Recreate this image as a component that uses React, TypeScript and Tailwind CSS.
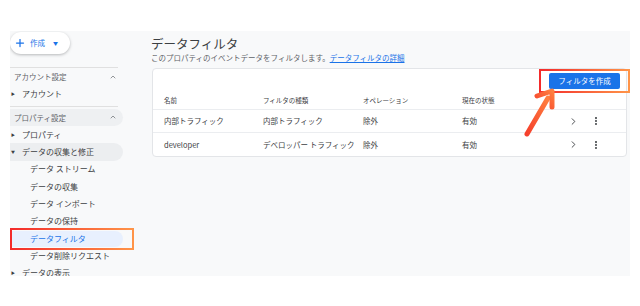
import { ChevronRight, ChevronUp, MoreVertical, Plus } from 'lucide-react'

const font = { fontFamily: '"Noto Sans CJK JP", "Noto Sans", sans-serif' }

const rows = [
  { name: '内部トラフィック', type: '内部トラフィック', op: '除外', state: '有効' },
  { name: 'developer', type: 'デベロッパー トラフィック', op: '除外', state: '有効' },
]

function Caret({ open }: { open?: boolean }) {
  return (
    <span className="w-[12px] flex justify-start pl-[1px] text-[4px] text-[#3c4043]">{open ? '▼' : '▶'}</span>
  )
}

function SubItem({ label }: { label: string }) {
  return <div className="shrink-0 h-[17.33px] flex items-center pl-[20px] text-[8px] text-[#3c4043]">{label}</div>
}

export default function App() {
  return (
    <div className="w-[640px] h-[306px] bg-white pt-[31px] px-[10px] overflow-hidden" style={font}>
      <div className="h-[245px] bg-[#f8f9fa] flex overflow-hidden">
        {/* sidebar */}
        <aside className="w-[130px] shrink-0 flex flex-col">
          <button className="shrink-0 mt-[1px] w-[60px] h-[22px] rounded-full bg-white shadow-[0_1px_3px_rgba(60,64,67,0.35)] flex items-center pl-[4px] gap-[4px] text-[#1a73e8]">
            <Plus size={12} strokeWidth={2.5} />
            <span className="text-[7.5px]">作成</span>
            <span className="ml-[4px] text-[5px]">▼</span>
          </button>
          <div className="shrink-0 mt-[13px] w-[108px] h-px bg-[#e0e0e0]" />
          <div className="shrink-0 h-[17.33px] w-[113px] flex items-center justify-between pl-[4px] pr-[6px] text-[7.5px] text-[#5f6368]">
            <span>アカウント設定</span>
            <ChevronUp size={8} strokeWidth={2} />
          </div>
          <div className="shrink-0 h-[17.33px] flex items-center text-[8px] text-[#3c4043]">
            <Caret />
            <span>アカウント</span>
          </div>
          <div className="shrink-0 mt-[3px] w-[108px] h-px bg-[#e0e0e0]" />
          <div className="shrink-0 mt-[2px] h-[17.33px] w-[113px] flex items-center justify-between pl-[4px] pr-[6px] rounded-r-full bg-[#eef0f2] text-[7.5px] text-[#5f6368]">
            <span>プロパティ設定</span>
            <ChevronUp size={8} strokeWidth={2} />
          </div>
          <div className="shrink-0 h-[17.33px] flex items-center text-[8px] text-[#3c4043]">
            <Caret />
            <span>プロパティ</span>
          </div>
          <div className="shrink-0 h-[17.33px] w-[113px] flex items-center rounded-r-full bg-[#eceef0] text-[8px] text-[#3c4043]">
            <Caret open />
            <span>データの収集と修正</span>
          </div>
          <SubItem label="データ ストリーム" />
          <SubItem label="データの収集" />
          <SubItem label="データ インポート" />
          <SubItem label="データの保持" />
          <div className="shrink-0 relative h-[17.33px] flex items-center">
            <div className="ml-[2px] w-[111px] h-[16px] rounded-r-full bg-[#e8f0fe] flex items-center pl-[18px] text-[8px] text-[#1a73e8]">
              データフィルタ
            </div>
            <svg className="absolute left-0 top-[-2px]" width="124" height="22" viewBox="0 0 124 22">
              <defs>
                <linearGradient id="hl1" x1="0" y1="0" x2="1" y2="0">
                  <stop offset="0" stopColor="#f32b2b" />
                  <stop offset="1" stopColor="#ff9448" />
                </linearGradient>
              </defs>
              <rect x="1" y="1" width="122" height="20" fill="none" stroke="url(#hl1)" strokeWidth="2" />
            </svg>
          </div>
          <SubItem label="データ削除リクエスト" />
          <div className="shrink-0 h-[17.33px] flex items-center text-[8px] text-[#3c4043]">
            <Caret />
            <span>データの表示</span>
          </div>
        </aside>

        {/* main */}
        <main className="flex-1 pl-[11px] pt-[4px] pr-[4px] relative">
          <h1 className="text-[12.5px] leading-[18px] text-[#3c4043]">データフィルタ</h1>
          <p className="text-[7.5px] leading-[10px] text-[#5f6368]">
            このプロパティのイベントデータをフィルタします。
            <a className="text-[#1a73e8] underline">データフィルタの詳細</a>
          </p>
          <div className="mt-[5px] ml-[1px] w-[475px] bg-white border border-[#e3e5e8] rounded-[4px]">
            <div className="h-[23px] flex items-center justify-end pr-[6px]">
              <div className="relative">
                <button className="block w-[71px] h-[16px] bg-[#1a73e8] rounded-[2px] text-white text-[7.5px]">
                  フィルタを作成
                </button>
                <svg className="absolute left-[-10px] top-[-4px]" width="91" height="24" viewBox="0 0 91 24">
                  <defs>
                    <linearGradient id="hl2" x1="0" y1="0" x2="1" y2="0">
                      <stop offset="0" stopColor="#f32b2b" />
                      <stop offset="1" stopColor="#ff9448" />
                    </linearGradient>
                  </defs>
                  <rect x="1" y="1" width="89" height="22" fill="none" stroke="url(#hl2)" strokeWidth="2" />
                </svg>
              </div>
            </div>
            <div className="h-[18px] grid grid-cols-[99px_100px_99px_1fr] items-center pl-[11px] text-[6.5px] text-[#3c4043] border-b border-[#ebedf0]">
              <span>名前</span>
              <span>フィルタの種類</span>
              <span>オペレーション</span>
              <span>現在の状態</span>
            </div>
            {rows.map((r, i) => (
              <div
                key={i}
                className={`h-[23px] grid grid-cols-[99px_100px_99px_1fr] items-center pl-[11px] text-[7.5px] text-[#3c4043] ${i === 0 ? 'border-b border-[#ebedf0]' : ''}`}
              >
                <span>{r.name}</span>
                <span>{r.type}</span>
                <span>{r.op}</span>
                <div className="flex items-center">
                  <span>{r.state}</span>
                  <ChevronRight size={11} strokeWidth={2} className="ml-[91px] text-[#3c4043]" />
                  <MoreVertical size={10} strokeWidth={3} className="ml-[12px] text-[#3c4043]" />
                </div>
              </div>
            ))}
          </div>
          {/* annotation arrow */}
          <svg className="absolute left-[381px] top-[56px]" width="38" height="52" viewBox="0 0 38 52">
            <defs>
              <linearGradient id="ar" x1="0" y1="1" x2="1" y2="0">
                <stop offset="0" stopColor="#f5402c" />
                <stop offset="1" stopColor="#ff7f3f" />
              </linearGradient>
            </defs>
            <line x1="6" y1="47" x2="27" y2="11" stroke="url(#ar)" strokeWidth="5" strokeLinecap="round" />
            <path d="M16 9 L31 4 L31 20" fill="none" stroke="url(#ar)" strokeWidth="5" strokeLinecap="round" strokeLinejoin="round" />
          </svg>
        </main>
      </div>
    </div>
  )
}
